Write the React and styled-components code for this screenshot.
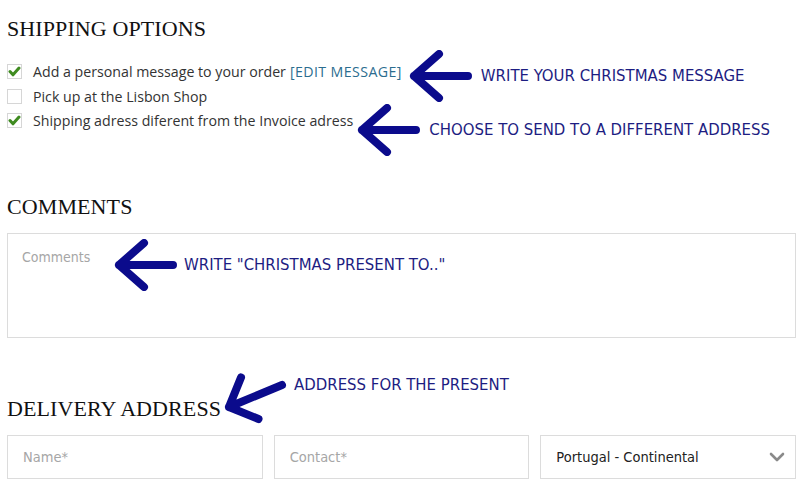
import React from "react";
import styled, { createGlobalStyle } from "styled-components";

const GlobalStyle = createGlobalStyle`
  html, body {
    margin: 0;
    padding: 0;
    background: #ffffff;
  }
  body {
    font-family: "Open Sans", "DejaVu Sans", sans-serif;
  }
`;

const NAVY = "#0b0b8c";
const NARROW = `"Liberation Sans Narrow", "DejaVu Sans Condensed", "Liberation Sans", sans-serif`;

const Page = styled.div`
  width: 800px;
  height: 490px;
  box-sizing: border-box;
  padding: 16px 4px 0 7px;
  overflow: hidden;
`;

const Heading = styled.h2`
  margin: 0;
  font-family: "Liberation Serif", "DejaVu Serif", serif;
  font-weight: 400;
  font-size: 22px;
  line-height: 1.2;
  color: #111111;
  letter-spacing: 0.1px;
`;

const OptionList = styled.div`
  margin-top: 17px;
  display: flex;
  flex-direction: column;
`;

const Row = styled.div`
  height: 24.5px;
  display: flex;
  align-items: center;
  font-size: 14.2px;
  color: #333333;
`;

const Box = styled.span`
  width: 15px;
  height: 15px;
  box-sizing: border-box;
  border: 1px solid #d6d6d6;
  background: #fff;
  margin-right: 11px;
  display: flex;
  align-items: center;
  justify-content: center;
  flex-shrink: 0;
`;

const EditLink = styled.a`
  color: #2b6d8f;
  text-decoration: none;
  margin-left: 4px;
  letter-spacing: 0.4px;
  cursor: pointer;
`;

const Callout = styled.div`
  display: flex;
  align-items: center;
  gap: ${(p) => p.$gap || 8}px;
  margin: -14px 0 -14px ${(p) => p.$left || 0}px;
  transform: translateY(${(p) => p.$shift || 0}px);
`;

const Note = styled.span`
  font-family: "DejaVu Sans Condensed", "DejaVu Sans", sans-serif;
  font-size: 16.6px;
  color: #1d1d82;
  white-space: nowrap;
`;

const CommentsHeading = styled(Heading)`
  margin-top: 61px;
`;

const CommentWrap = styled.div`
  position: relative;
  margin-top: 12.6px;
`;

const CommentArea = styled.textarea`
  display: block;
  width: 100%;
  height: 105px;
  box-sizing: border-box;
  border: 1px solid #dcdcdc;
  padding: 13px 14px;
  resize: none;
  font-family: ${NARROW};
  font-size: 14px;
  line-height: 20px;
  color: #333;
  outline: none;
  &::placeholder {
    color: #a6a6a6;
  }
`;

const CommentCallout = styled(Callout)`
  position: absolute;
  left: 107px;
  top: 6px;
  margin: 0;
`;

const DeliveryRow = styled.div`
  margin-top: 31px;
  display: flex;
  align-items: flex-end;
`;

const DeliveryNote = styled(Note)`
  align-self: flex-start;
  margin-top: 6px;
  margin-left: 3px;
`;

const DiagonalSvg = styled.svg`
  margin-left: 0;
  overflow: visible;
  flex-shrink: 0;
`;

const Fields = styled.div`
  margin-top: 12.6px;
  display: grid;
  grid-template-columns: repeat(3, 1fr);
  gap: 11px;
`;

const Field = styled.input`
  height: 44px;
  box-sizing: border-box;
  width: 100%;
  border: 1px solid #dcdcdc;
  padding: 0 15px;
  font-family: ${NARROW};
  font-size: 14.5px;
  color: #333;
  outline: none;
  &::placeholder {
    color: #a6a6a6;
  }
`;

const SelectBox = styled.div`
  height: 44px;
  box-sizing: border-box;
  border: 1px solid #dcdcdc;
  padding: 0 10px 0 15px;
  display: flex;
  align-items: center;
  justify-content: space-between;
  font-family: ${NARROW};
  font-size: 14.5px;
  color: #222;
`;

function Check() {
  return (
    <svg width="13" height="13" viewBox="0 0 13 13">
      <path
        d="M2 6.5 L5 9.8 L11 3"
        fill="none"
        stroke="#3f8b20"
        strokeWidth="3"
        strokeLinecap="round"
        strokeLinejoin="round"
      />
    </svg>
  );
}

function Arrow() {
  return (
    <svg width="64" height="52" viewBox="0 0 64 52" style={{ flexShrink: 0 }}>
      <path
        d="M59 26 L5 26 M30 4 L5 26 L30 48"
        fill="none"
        stroke={NAVY}
        strokeWidth="8"
        strokeLinecap="round"
        strokeLinejoin="round"
      />
    </svg>
  );
}

function Option({ checked, children }) {
  return (
    <Row>
      <Box>{checked && <Check />}</Box>
      {children}
    </Row>
  );
}

export default function App() {
  return (
    <Page>
      <GlobalStyle />
      <Heading>SHIPPING OPTIONS</Heading>
      <OptionList>
        <Option checked>
          Add a personal message to your order
          <EditLink>[EDIT MESSAGE]</EditLink>
          <Callout $left={7} $shift={4}>
            <Arrow />
            <Note>WRITE YOUR CHRISTMAS MESSAGE</Note>
          </Callout>
        </Option>
        <Option>Pick up at the Lisbon Shop</Option>
        <Option checked>
          Shipping adress diferent from the Invoice adress
          <Callout $left={4} $shift={9}>
            <Arrow />
            <Note>CHOOSE TO SEND TO A DIFFERENT ADDRESS</Note>
          </Callout>
        </Option>
      </OptionList>

      <CommentsHeading>COMMENTS</CommentsHeading>
      <CommentWrap>
        <CommentArea placeholder="Comments" />
        <CommentCallout $gap={6}>
          <Arrow />
          <Note>WRITE "CHRISTMAS PRESENT TO.."</Note>
        </CommentCallout>
      </CommentWrap>

      <DeliveryRow>
        <Heading>DELIVERY ADDRESS</Heading>
        <DiagonalSvg width="70" height="54" viewBox="0 0 70 54">
          <path
            d="M61 16 L8 38 M20 8.5 L8 38 L37.5 50"
            fill="none"
            stroke={NAVY}
            strokeWidth="8"
            strokeLinecap="round"
            strokeLinejoin="round"
          />
        </DiagonalSvg>
        <DeliveryNote>ADDRESS FOR THE PRESENT</DeliveryNote>
      </DeliveryRow>

      <Fields>
        <Field placeholder="Name*" />
        <Field placeholder="Contact*" />
        <SelectBox>
          Portugal - Continental
          <svg width="16" height="10" viewBox="0 0 16 10">
            <path
              d="M2 2 L8 8 L14 2"
              fill="none"
              stroke="#8a8a8a"
              strokeWidth="2.6"
              strokeLinecap="round"
              strokeLinejoin="round"
            />
          </svg>
        </SelectBox>
      </Fields>
    </Page>
  );
}
